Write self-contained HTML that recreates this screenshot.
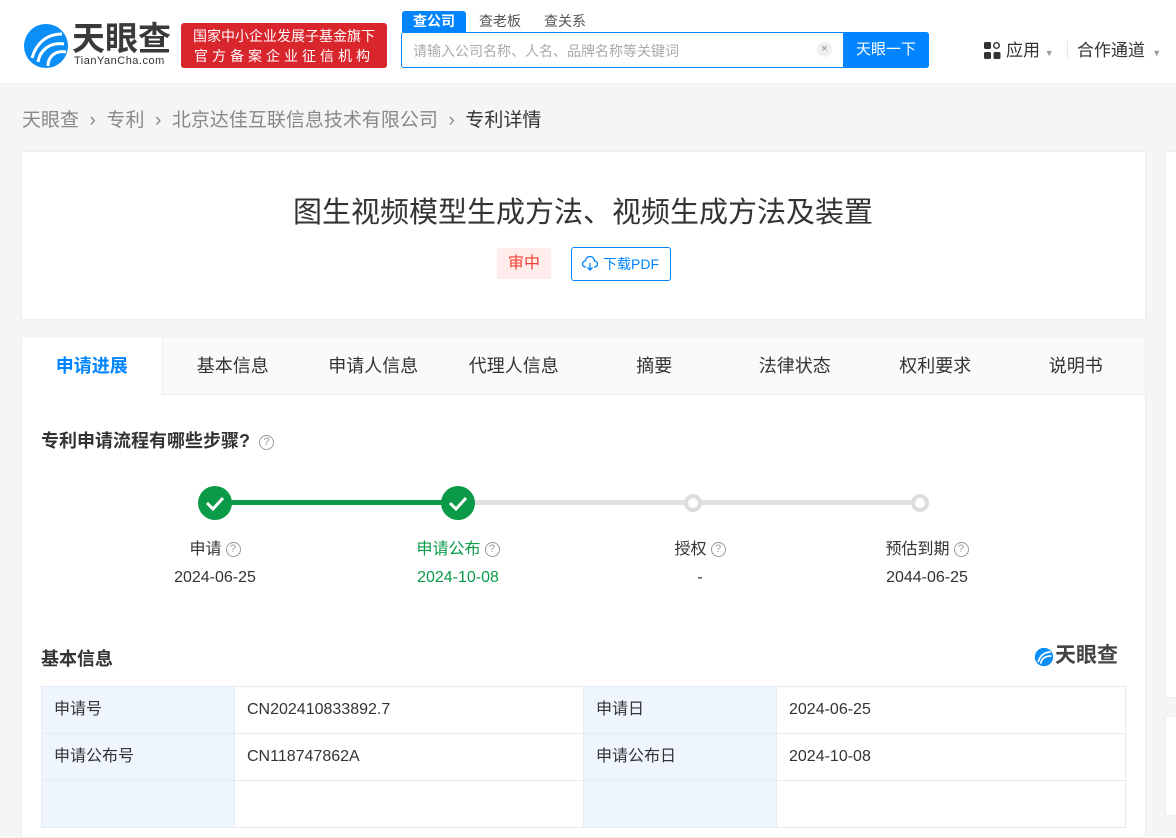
<!DOCTYPE html>
<html><head><meta charset="utf-8"><style>
*{margin:0;padding:0;box-sizing:border-box}
body{width:1176px;height:789px;overflow:hidden;background:#f5f5f5;font-family:"Liberation Sans","Noto Sans CJK SC",sans-serif;color:#333;position:relative}
.abs{position:absolute}
.hdr{left:0;top:0;width:1176px;height:84px;background:#fff;border-bottom:1px solid #eee}
.badge{left:181px;top:23px;width:206px;height:45px;background:#d9262c;border-radius:3px;color:#fff;font-size:14px;line-height:20px;text-align:center;padding-top:3px}
.stab{top:11px;height:21px;font-size:14px;line-height:21px;text-align:center;color:#555}
.search{left:401px;top:32px;width:528px;height:36px;border:1px solid #0084ff;border-radius:3px;background:#fff}
.btn{left:843px;top:32px;width:86px;height:36px;background:#0084ff;color:#fff;font-size:15px;line-height:36px;text-align:center;border-radius:0 3px 3px 0}
.card{background:#fff;border:1px solid #eee}
.tab{top:0;width:140.5px;height:57px;line-height:56px;text-align:center;font-size:18px;color:#333}
.q{display:inline-block;width:15px;height:15px;border:1px solid #999;border-radius:50%;font-size:11px;line-height:13px;text-align:center;color:#999;vertical-align:2px;margin-left:4px}
table{border-collapse:collapse;font-size:16px}
td{border:1px solid #e4ecf3;height:47px;padding:0 0 0 12px;vertical-align:middle;line-height:20px}
td.l{background:#eef5fd}
</style></head><body>
<div class="abs hdr"></div>
<svg class="abs" style="left:22px;top:22px" width="48" height="48" viewBox="0 0 48 48"><circle cx="24" cy="24" r="22" fill="#0b8ef5"/><path d="M10 36 C14 22 24 12 40 12 M16 40 C18 28 28 20 42 22 M26 44 C26 34 34 28 44 30" stroke="#fff" stroke-width="3" fill="none"/></svg>
<div class="abs" style="left:72px;top:21px;font-size:33px;font-weight:bold;color:#3a3a3a;line-height:36px">天眼查</div>
<div class="abs" style="left:74px;top:55px;font-size:11px;color:#333;letter-spacing:0.5px">TianYanCha.com</div>
<div class="abs badge">国家中小企业发展子基金旗下<br><span style="letter-spacing:4px">官方备案企业征信机构</span></div>
<div class="abs stab" style="left:402px;width:64px;background:#0084ff;color:#fff;border-radius:3px 3px 0 0;font-weight:bold">查公司</div>
<div class="abs stab" style="left:470px;width:60px">查老板</div>
<div class="abs stab" style="left:535px;width:60px">查关系</div>
<div class="abs search"></div>
<div class="abs" style="left:413px;top:41px;font-size:14px;color:#aaa">请输入公司名称、人名、品牌名称等关键词</div>
<div class="abs" style="left:817px;top:42px;width:15px;height:15px;border-radius:50%;background:#f0f0f0;color:#888;font-size:11px;line-height:15px;text-align:center">×</div>
<div class="abs btn">天眼一下</div>
<svg class="abs" style="left:984px;top:42px" width="17" height="17"><rect x="0" y="0" width="7" height="7" rx="1.5" fill="#333"/><circle cx="12.5" cy="3.5" r="2.8" fill="none" stroke="#333" stroke-width="1.4"/><rect x="0" y="10" width="7" height="7" rx="1.5" fill="#333"/><rect x="9.5" y="10" width="7" height="7" rx="1.5" fill="#333"/></svg>
<div class="abs" style="left:1006px;top:36px;font-size:17px;color:#333">应用 <span style="font-size:9px;color:#999">▼</span></div>
<div class="abs" style="left:1067px;top:41px;width:1px;height:18px;background:#e5e5e5"></div>
<div class="abs" style="left:1077px;top:36px;font-size:17px;color:#333">合作通道 <span style="font-size:9px;color:#999">&nbsp;▼</span></div>
<div class="abs" style="left:22px;top:105px;font-size:19px;color:#888">天眼查 &nbsp;›&nbsp; 专利 &nbsp;›&nbsp; 北京达佳互联信息技术有限公司 &nbsp;›&nbsp; <span style="color:#333">专利详情</span></div>
<div class="abs card" style="left:21px;top:151px;width:1125px;height:169px"></div>
<div class="abs" style="left:0;top:189px;width:1166px;text-align:center;font-size:29px;color:#333">图生视频模型生成方法、视频生成方法及装置</div>
<div class="abs" style="left:497px;top:248px;width:54px;height:31px;background:#ffeceb;border-radius:2px;color:#f04134;font-size:16px;line-height:31px;text-align:center">审中</div>
<div class="abs" style="left:571px;top:247px;width:100px;height:34px;border:1px solid #0084ff;border-radius:3px;color:#0084ff;font-size:14px;line-height:32px;padding-left:31px">下载PDF</div>
<svg class="abs" style="left:582px;top:256px" width="16" height="16" viewBox="0 0 16 16"><path d="M4 11 H3.5 A3 3 0 0 1 3.5 5 A4.5 4.5 0 0 1 12.5 5 A3 3 0 0 1 12.5 11 H12 M8 7 V14 M5.5 11.5 L8 14 L10.5 11.5" fill="none" stroke="#0084ff" stroke-width="1.3"/></svg>
<div class="abs card" style="left:21px;top:338px;width:1125px;height:500px"></div>
<div class="abs" style="left:22px;top:338px;width:1123px;height:57px;background:#fafafa;border-bottom:1px solid #eee">
<div class="abs tab" style="left:0;background:#fff;color:#0084ff;font-weight:bold;border-right:1px solid #eee;height:57px">申请进展</div>
<div class="abs tab" style="left:140.5px">基本信息</div>
<div class="abs tab" style="left:281px">申请人信息</div>
<div class="abs tab" style="left:421.5px">代理人信息</div>
<div class="abs tab" style="left:562px">摘要</div>
<div class="abs tab" style="left:702.5px">法律状态</div>
<div class="abs tab" style="left:843px">权利要求</div>
<div class="abs tab" style="left:983.5px">说明书</div>
</div>
<div class="abs" style="left:41px;top:427px;font-size:18px;font-weight:bold;color:#333">专利申请流程有哪些步骤? <span class="q" style="font-weight:normal">?</span></div>
<div class="abs" style="left:215px;top:500px;width:243px;height:5px;background:#0a9a48"></div>
<div class="abs" style="left:458px;top:500px;width:462px;height:5px;background:#e0e0e0"></div>
<svg class="abs" style="left:197px;top:485px" width="36" height="36"><circle cx="18" cy="18" r="17" fill="#0a9a48"/><path d="M10 18 L16 24 L26 13" stroke="#fff" stroke-width="3" fill="none"/></svg>
<svg class="abs" style="left:440px;top:485px" width="36" height="36"><circle cx="18" cy="18" r="17" fill="#0a9a48"/><path d="M10 18 L16 24 L26 13" stroke="#fff" stroke-width="3" fill="none"/></svg>
<svg class="abs" style="left:683px;top:493px" width="20" height="20"><circle cx="10" cy="10" r="7" fill="#fff" stroke="#ddd" stroke-width="4"/></svg>
<svg class="abs" style="left:910px;top:493px" width="20" height="20"><circle cx="10" cy="10" r="7" fill="#fff" stroke="#ddd" stroke-width="4"/></svg>
<div class="abs" style="left:115px;top:536px;width:200px;text-align:center;font-size:16px;line-height:28px">申请<span class="q">?</span><br>2024-06-25</div>
<div class="abs" style="left:358px;top:536px;width:200px;text-align:center;font-size:16px;line-height:28px;color:#0a9a48">申请公布<span class="q">?</span><br>2024-10-08</div>
<div class="abs" style="left:600px;top:536px;width:200px;text-align:center;font-size:16px;line-height:28px">授权<span class="q">?</span><br>-</div>
<div class="abs" style="left:827px;top:536px;width:200px;text-align:center;font-size:16px;line-height:28px">预估到期<span class="q">?</span><br>2044-06-25</div>
<div class="abs" style="left:41px;top:645px;font-size:18px;font-weight:bold;color:#333">基本信息</div>
<svg class="abs" style="left:1034px;top:647px" width="20" height="20" viewBox="0 0 48 48"><circle cx="24" cy="24" r="22" fill="#0b8ef5"/><path d="M10 36 C14 22 24 12 40 12 M16 40 C18 28 28 20 42 22" stroke="#fff" stroke-width="4" fill="none"/></svg>
<div class="abs" style="left:1055px;top:644px;font-size:21px;font-weight:bold;color:#444;line-height:24px">天眼查</div>
<table class="abs" style="left:41px;top:686px;width:1085px">
<tr><td class="l" style="width:193px">申请号</td><td style="width:349px">CN202410833892.7</td><td class="l" style="width:193px">申请日</td><td>2024-06-25</td></tr>
<tr><td class="l">申请公布号</td><td>CN118747862A</td><td class="l">申请公布日</td><td>2024-10-08</td></tr>
<tr><td class="l"></td><td></td><td class="l"></td><td></td></tr>
</table>
<div class="abs card" style="left:1165px;top:151px;width:20px;height:547px"></div>
<div class="abs card" style="left:1165px;top:716px;width:20px;height:100px"></div>
</body></html>
